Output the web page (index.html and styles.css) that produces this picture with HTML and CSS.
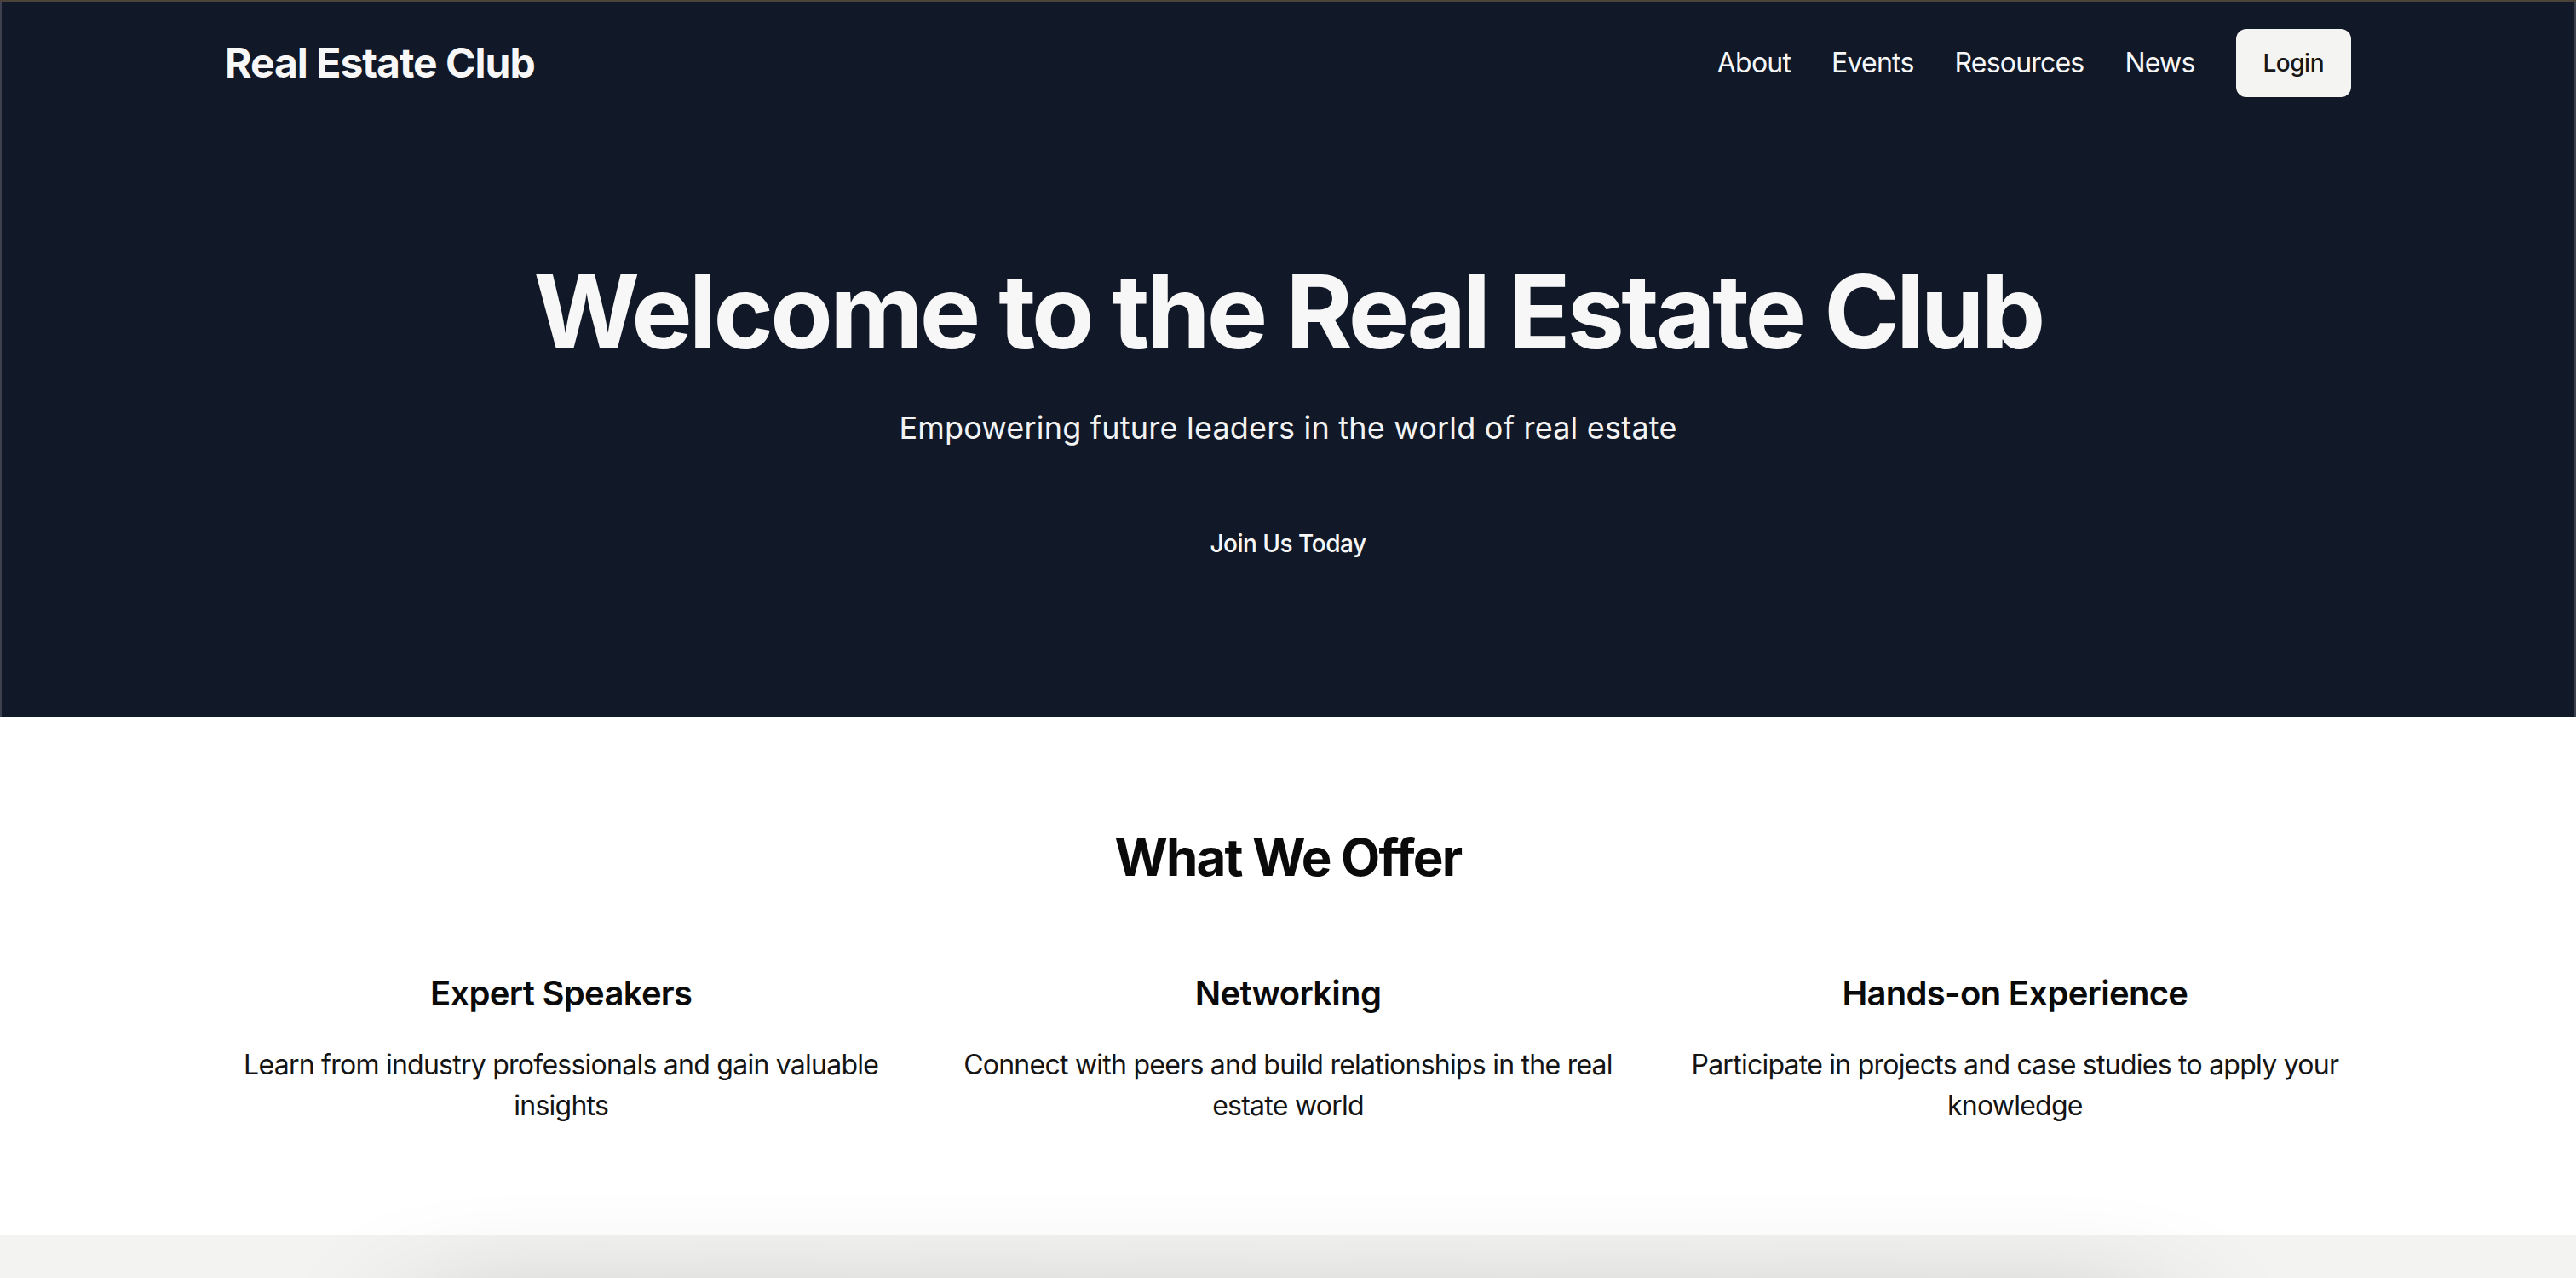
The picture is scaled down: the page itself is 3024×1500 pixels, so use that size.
FILE: index.html
```html
<!DOCTYPE html>
<html lang="en">
<head>
<meta charset="utf-8">
<title>Real Estate Club</title>
<link rel="stylesheet" href="styles.css">
</head>
<body>
  <header class="hero">
    <nav class="container nav">
      <div class="logo">Real Estate Club</div>
      <div class="nav-links">
        <a class="nav-link" href="#">About</a>
        <a class="nav-link" href="#">Events</a>
        <a class="nav-link" href="#">Resources</a>
        <a class="nav-link" href="#">News</a>
        <button class="login">Login</button>
      </div>
    </nav>
    <section class="container hero-body">
      <h1 class="hero-title">Welcome to the Real Estate Club</h1>
      <p class="hero-sub">Empowering future leaders in the world of real estate</p>
      <button class="join">Join Us Today</button>
    </section>
  </header>

  <section class="offer">
    <div class="container">
      <h2 class="offer-title">What We Offer</h2>
      <div class="offer-grid">
        <div class="feature">
          <h3 class="feature-title">Expert Speakers</h3>
          <p class="feature-text">Learn from industry professionals and gain valuable insights</p>
        </div>
        <div class="feature">
          <h3 class="feature-title">Networking</h3>
          <p class="feature-text">Connect with peers and build relationships in the real estate world</p>
        </div>
        <div class="feature">
          <h3 class="feature-title">Hands-on Experience</h3>
          <p class="feature-text">Participate in projects and case studies to apply your knowledge</p>
        </div>
      </div>
    </div>
  </section>

  <section class="next">
    <div class="next-card"></div>
  </section>
</body>
</html>
```

FILE: styles.css
```css
* {
  box-sizing: border-box;
}

html, body {
  margin: 0;
  padding: 0;
}

body {
  font-family: Inter, "Liberation Sans", sans-serif;
  background: #ffffff;
  color: #0a0a0a;
  border-top: 2px solid #4b4339;
  overflow: hidden;
}

.container {
  max-width: 2560px;
  margin: 0 auto;
  padding: 0 32px;
}

.hero {
  background: #111827;
  color: #f7f7f7;
  border-left: 2px solid #3c414d;
  border-right: 2px solid #3c414d;
}

.nav {
  display: flex;
  align-items: center;
  justify-content: space-between;
  padding-top: 32px;
  padding-bottom: 32px;
}

.logo {
  font-size: 48px;
  line-height: 64px;
  font-weight: 700;
  letter-spacing: -1px;
  color: #f7f7f7;
}

.nav-links {
  display: flex;
  align-items: center;
  gap: 48px;
}

.nav-link {
  color: #f7f7f7;
  text-decoration: none;
  font-size: 32px;
  line-height: 48px;
  letter-spacing: -0.8px;
}

.login {
  height: 80px;
  padding: 0 32px;
  border: none;
  border-radius: 12px;
  background: #f4f4f2;
  color: #171717;
  font-family: inherit;
  font-size: 28px;
  font-weight: 500;
  letter-spacing: -0.5px;
}

.hero-body {
  padding-top: 160px;
  padding-bottom: 160px;
  text-align: center;
  display: flex;
  flex-direction: column;
  align-items: center;
}

.hero-title {
  margin: 0 0 48px;
  font-size: 120px;
  line-height: 120px;
  font-weight: 700;
  letter-spacing: -3.8px;
  color: #f7f7f7;
}

.hero-sub {
  margin: 0 0 64px;
  font-size: 36px;
  line-height: 56px;
  letter-spacing: 0.2px;
  color: #f3f3f3;
}

.join {
  height: 88px;
  padding: 0 64px;
  border: none;
  background: transparent;
  color: #f7f7f7;
  font-family: inherit;
  font-size: 28px;
  font-weight: 500;
  letter-spacing: -0.5px;
}

.offer {
  padding: 128px 0;
  background: #ffffff;
  text-align: center;
}

.offer-title {
  margin: 0 0 96px;
  font-size: 60px;
  line-height: 72px;
  font-weight: 700;
  letter-spacing: -1.8px;
}

.offer-grid {
  display: grid;
  grid-template-columns: repeat(3, 1fr);
  gap: 64px;
}

.feature-title {
  margin: 0 0 32px;
  font-size: 40px;
  line-height: 56px;
  font-weight: 600;
  letter-spacing: -0.7px;
}

.feature-text {
  margin: 0;
  font-size: 32px;
  line-height: 48px;
  letter-spacing: -0.75px;
  color: #141414;
}

.next {
  background: #f3f3f2;
  padding: 128px 0;
}

.next-card {
  max-width: 2048px;
  height: 400px;
  margin: 0 auto;
  background: #ffffff;
  border-radius: 24px;
  box-shadow: 0 0 160px rgba(0, 0, 0, 0.45);
}
```
